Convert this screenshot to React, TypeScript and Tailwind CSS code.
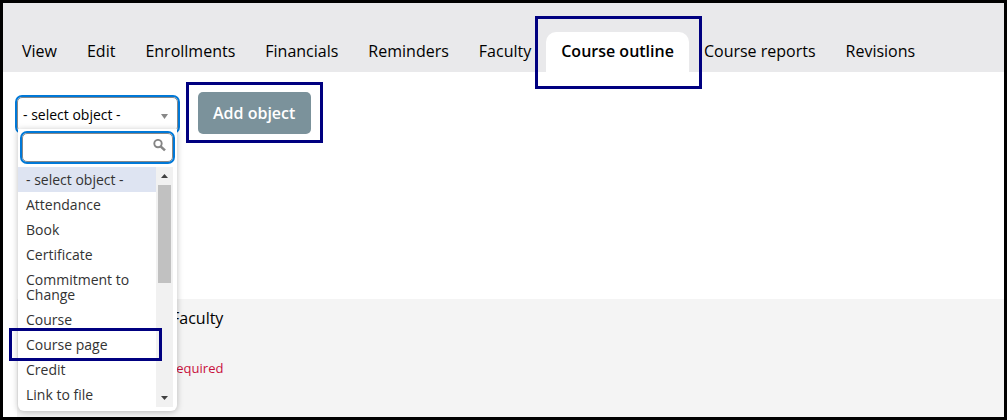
import { useState } from "react";

const TABS = [
  "View",
  "Edit",
  "Enrollments",
  "Financials",
  "Reminders",
  "Faculty",
  "Course outline",
  "Course reports",
  "Revisions",
];

const OBJECTS = [
  "- select object -",
  "Attendance",
  "Book",
  "Certificate",
  "Commitment to Change",
  "Course",
  "Course page",
  "Credit",
  "Link to file",
];

function Highlight({ className }: { className: string }) {
  return <span aria-hidden="true" className={`pointer-events-none absolute z-30 border-3 border-[#000080] ${className}`} />;
}

function TabBar() {
  return (
    <nav className="flex h-[69px] items-end bg-[#e9e9eb] pl-1">
      {TABS.map((tab) =>
        tab === "Course outline" ? (
          <a key={tab} href="#outline" aria-current="page"
            className="relative h-10 rounded-t-[10px] bg-white px-[15px] leading-[38px] font-semibold whitespace-nowrap"
          >
            {tab}
            <Highlight className="-top-4 -right-[13px] -bottom-[17px] -left-[11px]" />
          </a>
        ) : (
          <a key={tab} href="#tab" className="h-10 px-[15px] leading-[38px] whitespace-nowrap">
            {tab}
          </a>
        )
      )}
    </nav>
  );
}

function Scrollbar() {
  return (
    <div className="flex w-[17px] flex-col items-center justify-between bg-[#f1f1f1] pt-[7px] pb-[7px]" aria-hidden="true">
      <svg width="7" height="4" viewBox="0 0 7 4"><path d="M0 4 3.5 0 7 4z" fill="#404040" /></svg>
      <div className="mt-[7px] mb-auto h-[98px] w-[13px] bg-[#c1c1c1]" />
      <svg width="7" height="4" viewBox="0 0 7 4"><path d="M0 0h7L3.5 4z" fill="#404040" /></svg>
    </div>
  );
}

function ObjectMenu({ value, onPick }: { value: string; onPick: (v: string) => void }) {
  const [query, setQuery] = useState("");
  const shown = OBJECTS.filter((o) => o.toLowerCase().includes(query.toLowerCase()));

  return (
    <div className="absolute top-[34px] left-[3px] z-20 w-[159px] rounded-b-md bg-white pb-1 shadow-[0_1px_6px_rgba(0,0,0,0.25)]">
      <div className="px-1 pt-1 pb-[5px]">
        <div className="relative">
          <input type="text" aria-label="Search objects" value={query} onChange={(e) => setQuery(e.target.value)}
            className="block h-[29px] w-full rounded-[5px] border border-[#888] bg-white pr-6 pl-1 text-sm outline-2 outline-[#0078d7]"
          />
          <svg className="absolute top-[6px] right-[7px]" width="13" height="13" viewBox="0 0 13 13" fill="none" stroke="#858585" aria-hidden="true">
            <circle cx="5" cy="4.6" r="3.7" strokeWidth="1.9" />
            <path d="m7.6 7.4 4.4 4" strokeWidth="2.6" />
          </svg>
        </div>
      </div>
      <div className="flex pr-1">
        <ul role="listbox" aria-label="Objects" className="flex-1 text-sm leading-[15px] text-[#333]">
          {shown.map((o) => (
            <li key={o} role="option" aria-selected={o === value} onClick={() => onPick(o)}
              className={`relative cursor-default px-2 py-[5px] ${o === value ? "bg-[#dee4f2]" : ""}`}
            >
              {o}
              {o === "Course page" && <Highlight className="-top-1 -right-[6px] -bottom-1 -left-[9px]" />}
            </li>
          ))}
        </ul>
        <Scrollbar />
      </div>
    </div>
  );
}

export default function App() {
  const [object, setObject] = useState(OBJECTS[0]);

  return (
    <div className="flex min-h-screen flex-col border-3 border-black bg-white font-['Open_Sans','Noto_Sans',sans-serif] text-base text-black">
      <TabBar />

      <main className="flex flex-1 flex-col">
        <div className="flex h-[227px] items-start gap-[18px] pt-5 pl-3">
          <div className="relative mt-[3px] w-[165px]">
            <select aria-label="Object" value={object} onChange={(e) => setObject(e.target.value)}
              className="m-0.5 block h-[35px] w-[161px] appearance-none rounded-[5px] border border-[#888] bg-white pr-6 pl-[5px] text-sm outline-2 outline-[#0078d7]"
            >
              {OBJECTS.map((o) => <option key={o}>{o}</option>)}
            </select>
            <svg className="pointer-events-none absolute top-[19px] right-3" width="7" height="5" viewBox="0 0 7 5" aria-hidden="true">
              <path d="M0 0h7L3.5 5z" fill="#888" />
            </svg>
            <ObjectMenu value={object} onPick={setObject} />
          </div>

          <button type="button" className="relative h-[42px] rounded-[5px] bg-[#7b929b] pr-4 pl-[15px] font-semibold text-white">
            Add object
            <Highlight className="-top-[10px] -right-3 -bottom-[9px] -left-3" />
          </button>
        </div>

        <section className="ml-[14px] flex-1 bg-[#f4f4f4] pt-[7px] pl-[154px]">
          <h2 className="leading-6">Faculty</h2>
          <p className="mt-7 text-[13px] leading-5 text-[#c8103c]">required</p>
        </section>
      </main>
    </div>
  );
}
